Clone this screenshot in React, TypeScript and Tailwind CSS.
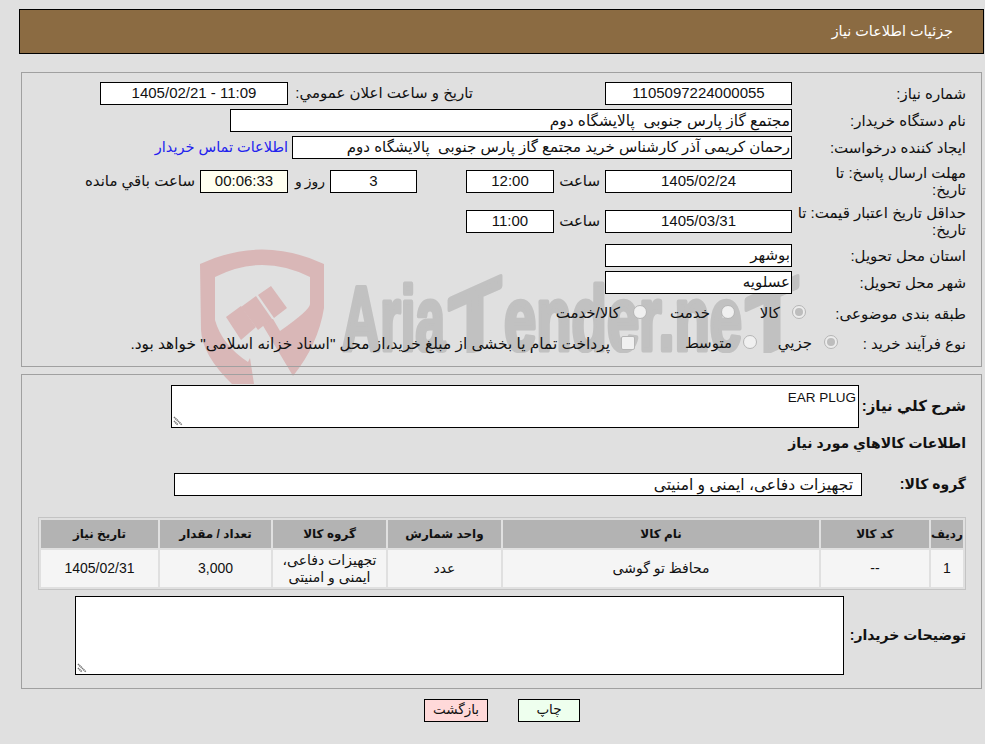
import React from "react";

const Box = ({ w, center, bg, children }: { w: string; center?: boolean; bg?: string; children?: React.ReactNode }) => (
  <div className={`${w} ${bg ?? "bg-white"} ${center ? "justify-center" : "justify-start pr-[1px]"} flex h-[23px] shrink-0 items-center overflow-hidden whitespace-pre border border-black`}>
    {children}
  </div>
);

const Radio = ({ on }: { on?: boolean }) => (
  <span className={`flex h-[14px] w-[14px] shrink-0 -translate-y-[2px] items-center justify-center rounded-full border border-[#b5b5b5] ${on ? "bg-[#ececec]" : "bg-[#f0f0f0]"}`}>
    {on ? <span className="h-[8px] w-[8px] rounded-full bg-[#bdbdbd]" /> : null}
  </span>
);

const Th = ({ w, children }: { w: string; children: React.ReactNode }) => (
  <th className={`${w} h-[28px] bg-[#b3b3b3] p-0 text-center text-[12px] font-bold text-[#111]`}>{children}</th>
);
const Td = ({ children }: { children: React.ReactNode }) => (
  <td className="h-[37px] bg-[#f5f5f5] p-0 text-center text-[14px] leading-[17px]">{children}</td>
);

const Grip = () => (
  <svg className="absolute bottom-[1px] left-[1px]" width="11" height="11" viewBox="0 0 11 11">
    <path d="M1 2 L9 10 M1 6 L5 10" stroke="#777" strokeWidth="1.6" fill="none" strokeDasharray="1.4 .5" />
  </svg>
);

const Watermark = () => (
  <svg dir="ltr" direction="ltr" className="absolute left-0 top-0" width="985" height="744" viewBox="0 0 985 744" aria-hidden="true">
    <defs>
      <clipPath id="wm-base">
        <rect x="330" y="260" width="480" height="93" />
      </clipPath>
    </defs>
    <g fill="#d9b7b7">
      <path fillRule="evenodd" d="M200 264 Q262 235 324 264 L324 308 Q318 345 293 376 L259 319 L273 319 L280 331 Q310 310 310 304 L310 277 Q262 253 215 277 L215 320 Q222 345 248 362 L250 358 L254 384 L232 384 Q202 355 201 330 Z" />
      <path d="M226 317 L241 306 L256 327 L241 340 Z" />
      <path d="M241 307 L256 296 L272 319 L258 330 Z" />
      <path d="M258 295 L271 286 L287 308 L274 318 Z" />
    </g>
    <g clipPath="url(#wm-base)">
      <g fill="#c1c1c1" stroke="#c1c1c1" strokeWidth="5" strokeLinejoin="round" fontFamily="'Liberation Sans'" fontWeight="700" fontSize="90">
        <text x="342" y="350" textLength="103" lengthAdjust="spacingAndGlyphs">Aria</text>
        <text x="449" y="350" textLength="52" lengthAdjust="spacingAndGlyphs" transform="translate(475 320) skewY(-24) translate(-475 -320)">T</text>
        <text x="504" y="350" textLength="238" lengthAdjust="spacingAndGlyphs">ender.ne</text>
        <text x="746" y="350" textLength="52" lengthAdjust="spacingAndGlyphs" transform="translate(772 320) skewY(-24) translate(-772 -320)">T</text>
      </g>
    </g>
  </svg>
);

const Row = ({ mt, children }: { mt: string; children: React.ReactNode }) => (
  <div className={`${mt} flex min-h-[23px] items-center`}>{children}</div>
);
const Label = ({ children }: { children: React.ReactNode }) => (
  <div className="w-[169px] shrink-0 whitespace-nowrap leading-[17px]">{children}</div>
);

export default function App() {
  return (
    <div dir="rtl" className="relative h-[744px] w-[985px] overflow-hidden bg-[#e0e0e0] font-['Liberation_Sans','DejaVu_Sans',sans-serif] text-[15px] text-[#111]">
      <Watermark />
      <div className="relative pt-[9px]">
        <div className="ml-auto mr-[1px] flex h-[45px] w-[965px] items-center border border-black bg-[#8b6b42] pr-[30px] text-[14.4px] text-white">
          جزئیات اطلاعات نیاز
        </div>

        <section className="mr-[3px] mt-[18px] h-[295px] w-[961px] border border-[#a0a0a0] pr-[15px] pt-[9px]">
          <Row mt="mt-0">
            <Label>شماره نياز:</Label>
            <div className="mr-[5px]"><Box w="w-[187px]" center>1105097224000055</Box></div>
            <div className="mr-[132px] w-[180px] shrink-0 whitespace-nowrap">تاریخ و ساعت اعلان عمومي:</div>
            <div className="mr-[5px]"><Box w="w-[188px]" center><span dir="ltr">1405/02/21 - 11:09</span></Box></div>
          </Row>
          <Row mt="mt-[4px]">
            <Label>نام دستگاه خريدار:</Label>
            <div className="mr-[5px]"><Box w="w-[562px]"><span className="text-[15.4px]">مجتمع گاز پارس جنوبی  پالایشگاه دوم</span></Box></div>
          </Row>
          <Row mt="mt-[4px]">
            <Label>ایجاد کننده درخواست:</Label>
            <div className="mr-[5px]"><Box w="w-[500px]">رحمان کریمی آذر کارشناس خرید مجتمع گاز پارس جنوبی  پالایشگاه دوم</Box></div>
            <a className="mr-[4px] whitespace-nowrap text-[14.5px] text-[#2222ee]">اطلاعات تماس خريدار</a>
          </Row>
          <Row mt="mt-[5px]">
            <Label>مهلت ارسال پاسخ: تا<br />تاریخ:</Label>
            <div className="mr-[5px]"><Box w="w-[187px]" center>1405/02/24</Box></div>
            <div className="mr-[5px] w-[41px] shrink-0">ساعت</div>
            <div className="mr-[5px]"><Box w="w-[88px]" center>12:00</Box></div>
            <div className="mr-[49px]"><Box w="w-[87px]" center>3</Box></div>
            <div className="mr-[5px] w-[37px] shrink-0 whitespace-nowrap text-[14px] [word-spacing:-1px]">روز و</div>
            <Box w="w-[88px]" center bg="bg-[#fffff0]">00:06:33</Box>
            <div className="mr-[5px] whitespace-nowrap">ساعت باقي مانده</div>
          </Row>
          <Row mt="mt-[6px]">
            <Label>حداقل تاریخ اعتبار قیمت: تا<br />تاریخ:</Label>
            <div className="mr-[5px]"><Box w="w-[187px]" center>1405/03/31</Box></div>
            <div className="mr-[5px] w-[41px] shrink-0">ساعت</div>
            <div className="mr-[5px]"><Box w="w-[88px]" center>11:00</Box></div>
          </Row>
          <Row mt="mt-[6px]">
            <Label>استان محل تحویل:</Label>
            <div className="mr-[5px]"><Box w="w-[187px]">بوشهر</Box></div>
          </Row>
          <Row mt="mt-[4px]">
            <Label>شهر محل تحویل:</Label>
            <div className="mr-[5px]"><Box w="w-[187px]">عسلویه</Box></div>
          </Row>
          <Row mt="mt-[8px]">
            <Label>طبقه بندی موضوعی:</Label>
            <div className="mr-[-9px]"><Radio on /></div>
            <div className="mr-[12px] w-[45px] shrink-0">کالا</div>
            <Radio />
            <div className="mr-[11px] w-[63px] shrink-0">خدمت</div>
            <Radio />
            <div className="mr-[13px] whitespace-nowrap">کالا/خدمت</div>
          </Row>
          <Row mt="mt-[7px]">
            <Label>نوع فرآيند خريد :</Label>
            <div className="mr-[-41px]"><Radio on /></div>
            <div className="mr-[12px] w-[55px] shrink-0">جزيي</div>
            <Radio />
            <div className="mr-[11px] w-[97px] shrink-0">متوسط</div>
            <span className="h-[14px] w-[14px] shrink-0 -translate-y-[1px] rounded-[2px] border border-[#b5b5b5] bg-[#f0f0f0]" />
            <div className="mr-[11px] whitespace-nowrap text-[15.4px]">پرداخت تمام یا بخشی از مبلغ خرید،از محل "اسناد خزانه اسلامی" خواهد بود.</div>
          </Row>
        </section>

        <section className="mr-[3px] mt-[7px] h-[315px] w-[961px] border border-[#a0a0a0] pr-[15px] pt-[10px]">
          <div className="flex items-center">
            <div className="w-[107px] shrink-0 text-[15px] font-bold">شرح كلي نياز:</div>
            <div dir="ltr" className="relative h-[43px] w-[688px] border border-black bg-white pr-[2px] pt-[2px] text-right text-[13.5px] leading-[20px]">
              EAR PLUG
              <Grip />
            </div>
          </div>
          <div className="mt-[6px] text-[14px] font-bold leading-[18px]">اطلاعات كالاهاي مورد نياز</div>
          <div className="mt-[21px] flex items-center">
            <div className="w-[104px] shrink-0 text-[14px] font-bold">گروه كالا:</div>
            <div className="flex h-[23px] w-[688px] items-center border border-black bg-white pr-[8px] text-[15.5px]">تجهیزات دفاعی، ایمنی و امنیتی</div>
          </div>
          <table className="mt-[21px] w-[928px] table-fixed border-separate border-spacing-[2px] border border-[#c4c4c4]">
            <thead>
              <tr>
                <Th w="w-[32px]">رديف</Th>
                <Th w="w-[108px]">کد کالا</Th>
                <Th w="w-[316px]">نام کالا</Th>
                <Th w="w-[113px]">واحد شمارش</Th>
                <Th w="w-[113px]">گروه کالا</Th>
                <Th w="w-[111px]">تعداد / مقدار</Th>
                <Th w="w-[117px]">تاریخ نیاز</Th>
              </tr>
            </thead>
            <tbody>
              <tr>
                <Td>1</Td>
                <Td>--</Td>
                <Td>محافظ تو گوشی</Td>
                <Td>عدد</Td>
                <Td>تجهیزات دفاعی، ایمنی و امنیتی</Td>
                <Td>3,000</Td>
                <Td>1405/02/31</Td>
              </tr>
            </tbody>
          </table>
          <div className="mt-[6px] flex items-center">
            <div className="w-[122px] shrink-0 text-[14px] font-bold">توضیحات خریدار:</div>
            <div className="relative h-[79px] w-[769px] border border-black bg-white">
              <Grip />
            </div>
          </div>
        </section>

        <div className="mt-[10px] flex justify-center gap-[30px] pl-[19px] text-[13.5px]">
          <button className="h-[23px] w-[62px] border border-black bg-[#eeffee]">چاپ</button>
          <button className="h-[23px] w-[64px] border border-black bg-[#ffd9d9]">بازگشت</button>
        </div>
      </div>
    </div>
  );
}
